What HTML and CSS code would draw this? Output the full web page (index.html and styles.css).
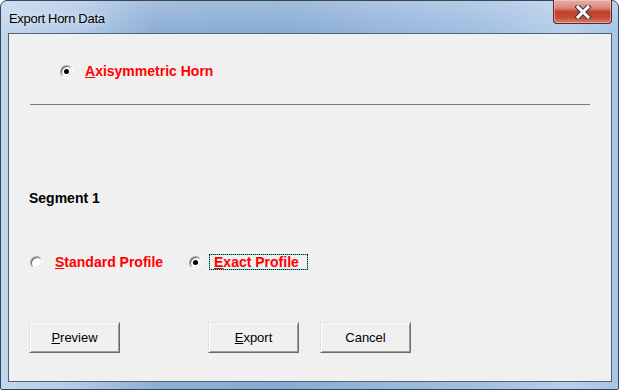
FILE: index.html
```html
<!DOCTYPE html>
<html>
  <head>
    <title>Export Horn Data</title>
    <link rel="stylesheet" href="styles.css">
  </head>
  <body>
    <div class="window">

      <div class="titleBar">
        <div class="titleText">Export Horn Data</div>
        <div class="closeBtn">
          <svg width="18" height="14" viewBox="0 0 18 14">
            <path d="M4 2 L14 12 M14 2 L4 12" stroke="#3a3a3a" stroke-width="5" stroke-linecap="square"/>
            <path d="M4 2 L14 12 M14 2 L4 12" stroke="#ffffff" stroke-width="3" stroke-linecap="square"/>
          </svg>
        </div>
      </div>

      <div class="client">

        <div class="hornRow">
          <div class="radio on"></div>
          <div class="optLabel"><u>A</u>xisymmetric Horn</div>
        </div>

        <div class="rule"></div>

        <div class="segmentTitle">Segment 1</div>

        <div class="profileRow">
          <div class="option">
            <div class="radio"></div>
            <div class="optLabel"><u>S</u>tandard Profile</div>
          </div>
          <div class="option">
            <div class="radio on"></div>
            <div class="focusBox">
              <div class="optLabel"><u>E</u>xact Profile</div>
            </div>
          </div>
        </div>

        <div class="buttonRow">
          <button class="winButton previewButton"><u>P</u>review</button>
          <button class="winButton exportButton"><u>E</u>xport</button>
          <button class="winButton cancelButton">Cancel</button>
        </div>

      </div>
    </div>
  </body>
</html>
```

FILE: styles.css
```css
  body {
    margin: 0;
    width: 619px;
    height: 390px;
    overflow: hidden;
    background-color: #ffffff;
  }

  /* outer window frame */
  .window {
    width: 619px;
    height: 390px;
    box-sizing: border-box;
    border: 1px solid #3a4656;
    border-radius: 7px 7px 2px 2px;
    padding: 0 6px 7px 7px;
    background:
      linear-gradient(to bottom, rgba(255, 255, 255, 0.2), rgba(255, 255, 255, 0) 30px),
      linear-gradient(to right, #c2d7ee 0%, #b2cbe7 12%, #8eafd6 25%, #89abd3 45%, #97b7dc 62%, #a3c0e2 78%, #b7cfea 92%, #a8c5e7 100%);
  }

  .titleBar {
    height: 32px;
    display: flex;
    justify-content: space-between;
    align-items: flex-start;
  }

  .titleText {
    margin-top: 10px;
    margin-left: 1px;
    font-family: "Liberation Sans", Arial, sans-serif;
    font-size: 13px;
    letter-spacing: -0.3px;
    line-height: 15px;
    color: #000000;
    text-shadow: 0 0 6px rgba(255, 255, 255, 0.9);
  }

  .closeBtn {
    width: 59px;
    height: 24px;
    margin-top: -1px;
    box-sizing: border-box;
    border: 1px solid #5a2a24;
    border-top: none;
    border-radius: 0 0 4px 4px;
    background: linear-gradient(to bottom, #e8b2a8 0%, #d88878 35%, #c5412c 50%, #c54a35 75%, #dc7c68 100%);
    box-shadow: inset 0 0 0 1px rgba(255, 210, 200, 0.5);
    display: flex;
    justify-content: center;
    align-items: center;
  }

  /* grey dialog area */
  .client {
    height: 349px;
    box-sizing: border-box;
    border: 1px solid #56626f;
    background-color: #f0f0f0;
    font-family: "Liberation Sans", Arial, sans-serif;
  }

  .hornRow {
    margin-top: 29px;
    padding-left: 51px;
    height: 16px;
    display: flex;
    align-items: center;
  }

  .radio {
    width: 13px;
    height: 13px;
    flex-shrink: 0;
    box-sizing: border-box;
    border-radius: 50%;
    border: 1px solid;
    border-color: #a0a0a0 #ffffff #ffffff #a0a0a0;
    background-color: #ffffff;
    box-shadow: inset 1px 1px 0 #696969, inset -1px -1px 0 #e3e3e3;
    display: flex;
    justify-content: center;
    align-items: center;
    margin-right: 12px;
  }

  .radio.on::after {
    content: "";
    width: 5px;
    height: 5px;
    border-radius: 50%;
    background-color: #000000;
  }

  .optLabel {
    font-size: 14px;
    font-weight: bold;
    line-height: 16px;
    color: #ff0000;
    white-space: nowrap;
  }

  .rule {
    margin-top: 25px;
    margin-left: 21px;
    width: 560px;
    height: 0;
    border-top: 1px solid #7c7c7c;
  }

  .segmentTitle {
    margin-top: 85px;
    padding-left: 20px;
    font-size: 14px;
    font-weight: bold;
    line-height: 16px;
    color: #000000;
  }

  .profileRow {
    margin-top: 48px;
    padding-left: 21px;
    height: 16px;
    display: grid;
    grid-template-columns: 159px auto;
    align-items: center;
  }

  .option {
    display: flex;
    align-items: center;
  }

  .option .radio.on {
    margin-right: 7px;
  }

  /* dotted focus rectangle, cyan shows through the gaps */
  .focusBox {
    width: 99px;
    height: 16px;
    box-sizing: border-box;
    border: 1px dotted #0f2a2a;
    padding-left: 4px;
    background: linear-gradient(#f0f0f0, #f0f0f0) padding-box, #3cc8c8 border-box;
  }

  .focusBox .optLabel {
    line-height: 14px;
  }

  .buttonRow {
    margin-top: 52px;
    padding-left: 20px;
    display: flex;
  }

  .winButton {
    width: 91px;
    height: 31px;
    box-sizing: border-box;
    padding: 0;
    border: 1px solid;
    border-color: #e3e3e3 #696969 #696969 #e3e3e3;
    box-shadow: inset 1px 1px 0 #ffffff, inset -1px -1px 0 #a0a0a0;
    background-color: #f0f0f0;
    font-family: "Liberation Sans", Arial, sans-serif;
    font-size: 13px;
    color: #000000;
    border-radius: 0;
  }

  .exportButton {
    margin-left: 88px;
  }

  .cancelButton {
    margin-left: 21px;
  }
```
